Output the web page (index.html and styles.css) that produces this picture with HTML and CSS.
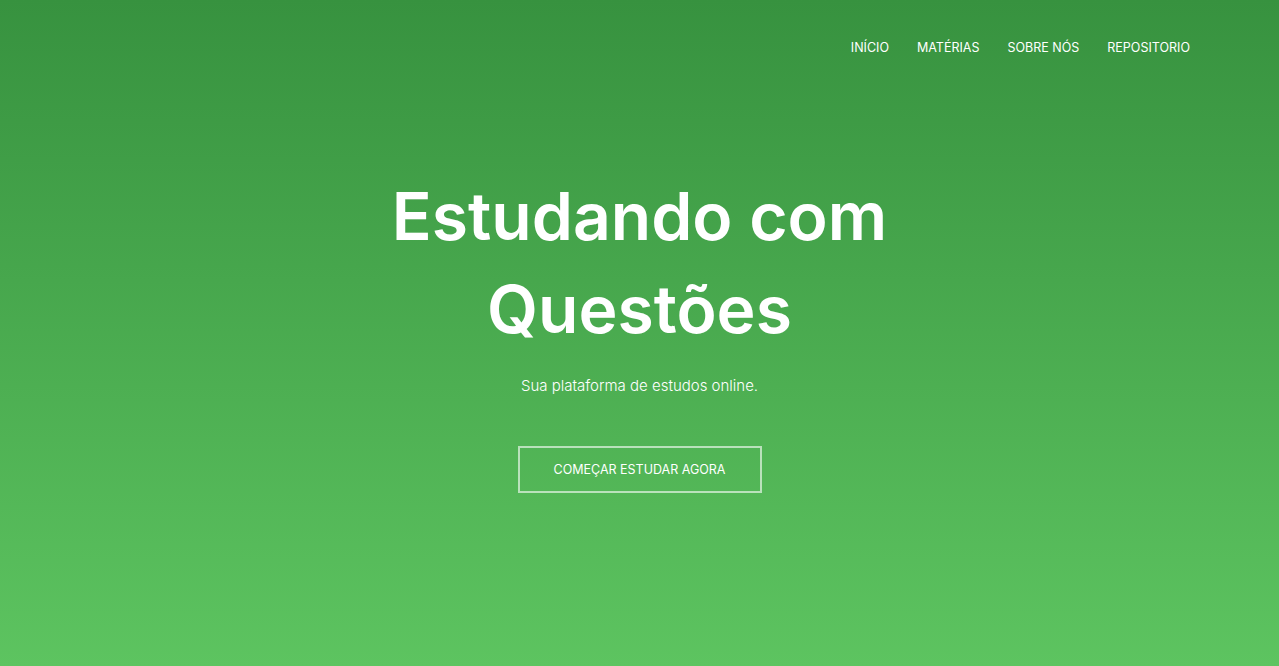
FILE: index.html
```html
<!DOCTYPE html>
<html lang="pt-BR">
<head>
<meta charset="utf-8">
<title>Estudando com Questões</title>
<link rel="stylesheet" href="styles.css">
</head>
<body>
<header class="hero">
  <nav class="nav">
    <a class="nav-link" href="#">INÍCIO</a>
    <a class="nav-link" href="#">MATÉRIAS</a>
    <a class="nav-link" href="#">SOBRE NÓS</a>
    <a class="nav-link" href="#">REPOSITORIO</a>
  </nav>
  <div class="hero-content">
    <h1 class="hero-title">Estudando com<br>Questões</h1>
    <p class="hero-sub">Sua plataforma de estudos online.</p>
    <a class="hero-btn" href="#">COMEÇAR ESTUDAR AGORA</a>
  </div>
</header>
</body>
</html>
```
FILE: styles.css
```css
* { box-sizing: border-box; }
html, body { margin: 0; padding: 0; }
body {
  font-family: "Inter", "Open Sans", "Liberation Sans", sans-serif;
  color: #fff;
}
.hero {
  height: 666px;
  background: linear-gradient(to bottom, #37923f 0%, #5dc460 100%);
  display: flex;
  flex-direction: column;
}
.nav {
  display: flex;
  justify-content: flex-end;
  gap: 28px;
  padding: 39px 89px 0 0;
  height: 84px;
}
.nav-link {
  color: #fff;
  text-decoration: none;
  font-size: 12.5px;
  line-height: 18px;
}
.hero-content {
  display: flex;
  flex-direction: column;
  align-items: center;
  text-align: center;
  padding-top: 86px;
}
.hero-title {
  margin: 0;
  font-size: 66px;
  font-weight: 600;
  line-height: 93px;
}
.hero-sub {
  margin: 19px 0 0;
  font-size: 15px;
  font-weight: 300;
  line-height: 22px;
}
.hero-btn {
  margin-top: 49px;
  width: 244px;
  height: 47px;
  display: flex;
  align-items: center;
  justify-content: center;
  border: 2px solid rgba(255,255,255,0.6);
  color: #fff;
  text-decoration: none;
  font-size: 12.5px;
}
```
